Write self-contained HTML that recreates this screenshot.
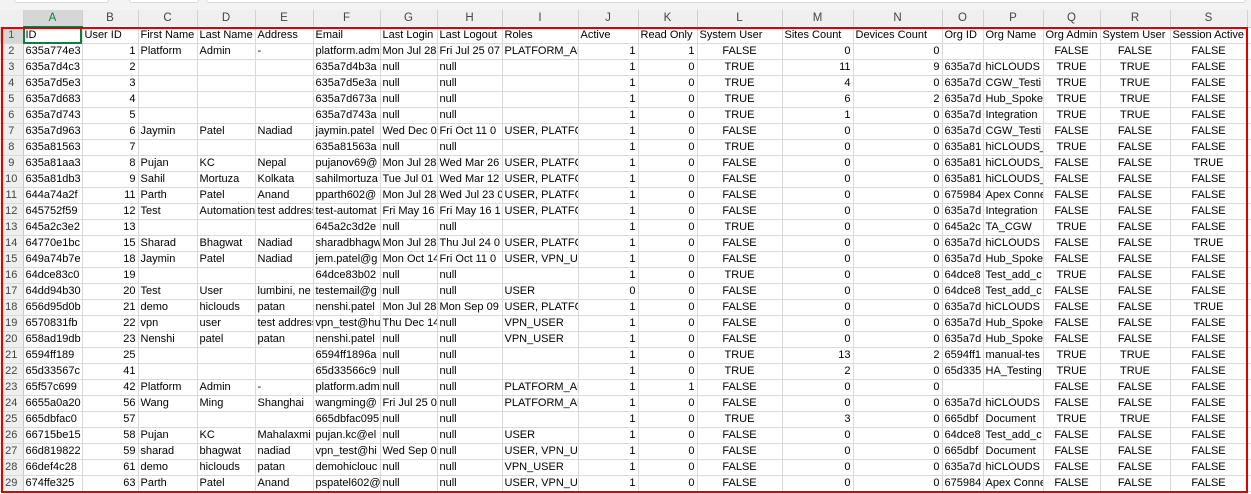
<!DOCTYPE html>
<html><head><meta charset="utf-8"><style>
*{margin:0;padding:0;box-sizing:border-box}
body{width:1251px;height:494px;overflow:hidden;background:#fff;font-family:"Liberation Sans",Arial,sans-serif;font-size:11px;color:#000;position:relative}
.top{position:absolute;left:0;top:0;width:1251px;height:10px;background:#f3f3f3}
.top div{position:absolute;top:0;height:3px;background:#fff;border:1px solid #d8d8d8;border-top:none;border-radius:0 0 3px 3px}
table{position:absolute;left:0;top:10px;border-collapse:collapse;table-layout:fixed;width:1251px}
td{height:16px;line-height:15px;border-right:1px solid #dadada;border-bottom:1px solid #dadada;white-space:nowrap;overflow:hidden;padding:0 2px;text-overflow:clip}
td:first-child{background:#efefef;color:#444;text-align:center;padding:0;border-right:1px solid #c8c8c8}
tr td:nth-child(3),tr td:nth-child(11),tr td:nth-child(12),tr td:nth-child(14),tr td:nth-child(15){text-align:right}
tr td:nth-child(13),tr td:nth-child(18),tr td:nth-child(19),tr td:nth-child(20){text-align:center}
tr.L td{height:17px;background:#efefef;color:#444;text-align:center!important;border-right:1px solid #d0d0d0;border-bottom:1px solid #c8c8c8;font-size:11.5px}
tr.L td.sel{background:#d6d6d6;color:#107c41;border-bottom:2px solid #107c41}
tr.h td{text-align:left!important}
tr.h td:first-child{text-align:center!important;color:#107c41;background:#d6d6d6}
tr.h td:nth-child(2){outline:2px solid #107c41;outline-offset:-2px}
.red{position:absolute;left:1px;top:27px;width:1247px;height:466px;border:2px solid #e00000;pointer-events:none}
</style></head><body>
<div class="top"><div style="left:14px;width:95px"></div><div style="left:129px;width:70px"></div><div style="left:206px;width:1040px"></div></div>
<table>
<colgroup><col style="width:23px"><col style="width:59px"><col style="width:56px"><col style="width:59px"><col style="width:58px"><col style="width:58px"><col style="width:67px"><col style="width:57px"><col style="width:65px"><col style="width:76px"><col style="width:60px"><col style="width:59px"><col style="width:85px"><col style="width:71px"><col style="width:89px"><col style="width:41px"><col style="width:60px"><col style="width:57px"><col style="width:70px"><col style="width:77px"><col style="width:4px"></colgroup>
<tr class="L"><td></td><td class="sel">A</td><td>B</td><td>C</td><td>D</td><td>E</td><td>F</td><td>G</td><td>H</td><td>I</td><td>J</td><td>K</td><td>L</td><td>M</td><td>N</td><td>O</td><td>P</td><td>Q</td><td>R</td><td>S</td><td></td></tr>
<tr class="h"><td>1</td><td>ID</td><td>User ID</td><td>First Name</td><td>Last Name</td><td>Address</td><td>Email</td><td>Last Login</td><td>Last Logout</td><td>Roles</td><td>Active</td><td>Read Only</td><td>System User</td><td>Sites Count</td><td>Devices Count</td><td>Org ID</td><td>Org Name</td><td>Org Admin</td><td>System User</td><td>Session Active</td><td></td></tr>
<tr><td>2</td><td>635a774e3</td><td>1</td><td>Platform</td><td>Admin</td><td>-</td><td>platform.adm</td><td>Mon Jul 28</td><td>Fri Jul 25 07</td><td>PLATFORM_AD</td><td>1</td><td>1</td><td>FALSE</td><td>0</td><td>0</td><td></td><td></td><td>FALSE</td><td>FALSE</td><td>FALSE</td><td></td></tr>
<tr><td>3</td><td>635a7d4c3</td><td>2</td><td></td><td></td><td></td><td>635a7d4b3a</td><td>null</td><td>null</td><td></td><td>1</td><td>0</td><td>TRUE</td><td>11</td><td>9</td><td>635a7d</td><td>hiCLOUDS</td><td>TRUE</td><td>TRUE</td><td>FALSE</td><td></td></tr>
<tr><td>4</td><td>635a7d5e3</td><td>3</td><td></td><td></td><td></td><td>635a7d5e3a</td><td>null</td><td>null</td><td></td><td>1</td><td>0</td><td>TRUE</td><td>4</td><td>0</td><td>635a7d</td><td>CGW_Testi</td><td>TRUE</td><td>TRUE</td><td>FALSE</td><td></td></tr>
<tr><td>5</td><td>635a7d683</td><td>4</td><td></td><td></td><td></td><td>635a7d673a</td><td>null</td><td>null</td><td></td><td>1</td><td>0</td><td>TRUE</td><td>6</td><td>2</td><td>635a7d</td><td>Hub_Spoke</td><td>TRUE</td><td>TRUE</td><td>FALSE</td><td></td></tr>
<tr><td>6</td><td>635a7d743</td><td>5</td><td></td><td></td><td></td><td>635a7d743a</td><td>null</td><td>null</td><td></td><td>1</td><td>0</td><td>TRUE</td><td>1</td><td>0</td><td>635a7d</td><td>Integration</td><td>TRUE</td><td>TRUE</td><td>FALSE</td><td></td></tr>
<tr><td>7</td><td>635a7d963</td><td>6</td><td>Jaymin</td><td>Patel</td><td>Nadiad</td><td>jaymin.patel</td><td>Wed Dec 0</td><td>Fri Oct 11 0</td><td>USER, PLATFOR</td><td>1</td><td>0</td><td>FALSE</td><td>0</td><td>0</td><td>635a7d</td><td>CGW_Testi</td><td>FALSE</td><td>FALSE</td><td>FALSE</td><td></td></tr>
<tr><td>8</td><td>635a81563</td><td>7</td><td></td><td></td><td></td><td>635a81563a</td><td>null</td><td>null</td><td></td><td>1</td><td>0</td><td>TRUE</td><td>0</td><td>0</td><td>635a81</td><td>hiCLOUDS_</td><td>TRUE</td><td>FALSE</td><td>FALSE</td><td></td></tr>
<tr><td>9</td><td>635a81aa3</td><td>8</td><td>Pujan</td><td>KC</td><td>Nepal</td><td>pujanov69@</td><td>Mon Jul 28</td><td>Wed Mar 26</td><td>USER, PLATFOR</td><td>1</td><td>0</td><td>FALSE</td><td>0</td><td>0</td><td>635a81</td><td>hiCLOUDS_</td><td>FALSE</td><td>FALSE</td><td>TRUE</td><td></td></tr>
<tr><td>10</td><td>635a81db3</td><td>9</td><td>Sahil</td><td>Mortuza</td><td>Kolkata</td><td>sahilmortuza</td><td>Tue Jul 01</td><td>Wed Mar 12</td><td>USER, PLATFOR</td><td>1</td><td>0</td><td>FALSE</td><td>0</td><td>0</td><td>635a81</td><td>hiCLOUDS_</td><td>FALSE</td><td>FALSE</td><td>FALSE</td><td></td></tr>
<tr><td>11</td><td>644a74a2f</td><td>11</td><td>Parth</td><td>Patel</td><td>Anand</td><td>pparth602@</td><td>Mon Jul 28</td><td>Wed Jul 23 0</td><td>USER, PLATFOR</td><td>1</td><td>0</td><td>FALSE</td><td>0</td><td>0</td><td>675984</td><td>Apex Conne</td><td>FALSE</td><td>FALSE</td><td>FALSE</td><td></td></tr>
<tr><td>12</td><td>645752f59</td><td>12</td><td>Test</td><td>Automation</td><td>test address</td><td>test-automat</td><td>Fri May 16</td><td>Fri May 16 1</td><td>USER, PLATFOR</td><td>1</td><td>0</td><td>FALSE</td><td>0</td><td>0</td><td>635a7d</td><td>Integration</td><td>FALSE</td><td>FALSE</td><td>FALSE</td><td></td></tr>
<tr><td>13</td><td>645a2c3e2</td><td>13</td><td></td><td></td><td></td><td>645a2c3d2e</td><td>null</td><td>null</td><td></td><td>1</td><td>0</td><td>TRUE</td><td>0</td><td>0</td><td>645a2c</td><td>TA_CGW</td><td>TRUE</td><td>FALSE</td><td>FALSE</td><td></td></tr>
<tr><td>14</td><td>64770e1bc</td><td>15</td><td>Sharad</td><td>Bhagwat</td><td>Nadiad</td><td>sharadbhagw</td><td>Mon Jul 28</td><td>Thu Jul 24 0</td><td>USER, PLATFOR</td><td>1</td><td>0</td><td>FALSE</td><td>0</td><td>0</td><td>635a7d</td><td>hiCLOUDS</td><td>FALSE</td><td>FALSE</td><td>TRUE</td><td></td></tr>
<tr><td>15</td><td>649a74b7e</td><td>18</td><td>Jaymin</td><td>Patel</td><td>Nadiad</td><td>jem.patel@g</td><td>Mon Oct 14</td><td>Fri Oct 11 0</td><td>USER, VPN_US</td><td>1</td><td>0</td><td>FALSE</td><td>0</td><td>0</td><td>635a7d</td><td>Hub_Spoke</td><td>FALSE</td><td>FALSE</td><td>FALSE</td><td></td></tr>
<tr><td>16</td><td>64dce83c0</td><td>19</td><td></td><td></td><td></td><td>64dce83b02</td><td>null</td><td>null</td><td></td><td>1</td><td>0</td><td>TRUE</td><td>0</td><td>0</td><td>64dce8</td><td>Test_add_c</td><td>TRUE</td><td>FALSE</td><td>FALSE</td><td></td></tr>
<tr><td>17</td><td>64dd94b30</td><td>20</td><td>Test</td><td>User</td><td>lumbini, ne</td><td>testemail@g</td><td>null</td><td>null</td><td>USER</td><td>0</td><td>0</td><td>FALSE</td><td>0</td><td>0</td><td>64dce8</td><td>Test_add_c</td><td>FALSE</td><td>FALSE</td><td>FALSE</td><td></td></tr>
<tr><td>18</td><td>656d95d0b</td><td>21</td><td>demo</td><td>hiclouds</td><td>patan</td><td>nenshi.patel</td><td>Mon Jul 28</td><td>Mon Sep 09</td><td>USER, PLATFOR</td><td>1</td><td>0</td><td>FALSE</td><td>0</td><td>0</td><td>635a7d</td><td>hiCLOUDS</td><td>FALSE</td><td>FALSE</td><td>TRUE</td><td></td></tr>
<tr><td>19</td><td>6570831fb</td><td>22</td><td>vpn</td><td>user</td><td>test address</td><td>vpn_test@hu</td><td>Thu Dec 14</td><td>null</td><td>VPN_USER</td><td>1</td><td>0</td><td>FALSE</td><td>0</td><td>0</td><td>635a7d</td><td>Hub_Spoke</td><td>FALSE</td><td>FALSE</td><td>FALSE</td><td></td></tr>
<tr><td>20</td><td>658ad19db</td><td>23</td><td>Nenshi</td><td>patel</td><td>patan</td><td>nenshi.patel</td><td>null</td><td>null</td><td>VPN_USER</td><td>1</td><td>0</td><td>FALSE</td><td>0</td><td>0</td><td>635a7d</td><td>Hub_Spoke</td><td>FALSE</td><td>FALSE</td><td>FALSE</td><td></td></tr>
<tr><td>21</td><td>6594ff189</td><td>25</td><td></td><td></td><td></td><td>6594ff1896a</td><td>null</td><td>null</td><td></td><td>1</td><td>0</td><td>TRUE</td><td>13</td><td>2</td><td>6594ff1</td><td>manual-tes</td><td>TRUE</td><td>TRUE</td><td>FALSE</td><td></td></tr>
<tr><td>22</td><td>65d33567c</td><td>41</td><td></td><td></td><td></td><td>65d33566c9</td><td>null</td><td>null</td><td></td><td>1</td><td>0</td><td>TRUE</td><td>2</td><td>0</td><td>65d335</td><td>HA_Testing</td><td>TRUE</td><td>TRUE</td><td>FALSE</td><td></td></tr>
<tr><td>23</td><td>65f57c699</td><td>42</td><td>Platform</td><td>Admin</td><td>-</td><td>platform.adm</td><td>null</td><td>null</td><td>PLATFORM_AD</td><td>1</td><td>1</td><td>FALSE</td><td>0</td><td>0</td><td></td><td></td><td>FALSE</td><td>FALSE</td><td>FALSE</td><td></td></tr>
<tr><td>24</td><td>6655a0a20</td><td>56</td><td>Wang</td><td>Ming</td><td>Shanghai</td><td>wangming@</td><td>Fri Jul 25 0</td><td>null</td><td>PLATFORM_AD</td><td>1</td><td>0</td><td>FALSE</td><td>0</td><td>0</td><td>635a7d</td><td>hiCLOUDS</td><td>FALSE</td><td>FALSE</td><td>FALSE</td><td></td></tr>
<tr><td>25</td><td>665dbfac0</td><td>57</td><td></td><td></td><td></td><td>665dbfac095</td><td>null</td><td>null</td><td></td><td>1</td><td>0</td><td>TRUE</td><td>3</td><td>0</td><td>665dbf</td><td>Document</td><td>TRUE</td><td>TRUE</td><td>FALSE</td><td></td></tr>
<tr><td>26</td><td>66715be15</td><td>58</td><td>Pujan</td><td>KC</td><td>Mahalaxmi</td><td>pujan.kc@el</td><td>null</td><td>null</td><td>USER</td><td>1</td><td>0</td><td>FALSE</td><td>0</td><td>0</td><td>64dce8</td><td>Test_add_c</td><td>FALSE</td><td>FALSE</td><td>FALSE</td><td></td></tr>
<tr><td>27</td><td>66d819822</td><td>59</td><td>sharad</td><td>bhagwat</td><td>nadiad</td><td>vpn_test@hi</td><td>Wed Sep 0</td><td>null</td><td>USER, VPN_US</td><td>1</td><td>0</td><td>FALSE</td><td>0</td><td>0</td><td>665dbf</td><td>Document</td><td>FALSE</td><td>FALSE</td><td>FALSE</td><td></td></tr>
<tr><td>28</td><td>66def4c28</td><td>61</td><td>demo</td><td>hiclouds</td><td>patan</td><td>demohiclouc</td><td>null</td><td>null</td><td>VPN_USER</td><td>1</td><td>0</td><td>FALSE</td><td>0</td><td>0</td><td>635a7d</td><td>hiCLOUDS</td><td>FALSE</td><td>FALSE</td><td>FALSE</td><td></td></tr>
<tr><td>29</td><td>674ffe325</td><td>63</td><td>Parth</td><td>Patel</td><td>Anand</td><td>pspatel602@</td><td>null</td><td>null</td><td>USER, VPN_US</td><td>1</td><td>0</td><td>FALSE</td><td>0</td><td>0</td><td>675984</td><td>Apex Conne</td><td>FALSE</td><td>FALSE</td><td>FALSE</td><td></td></tr>
</table>
<div class="red"></div>
</body></html>
